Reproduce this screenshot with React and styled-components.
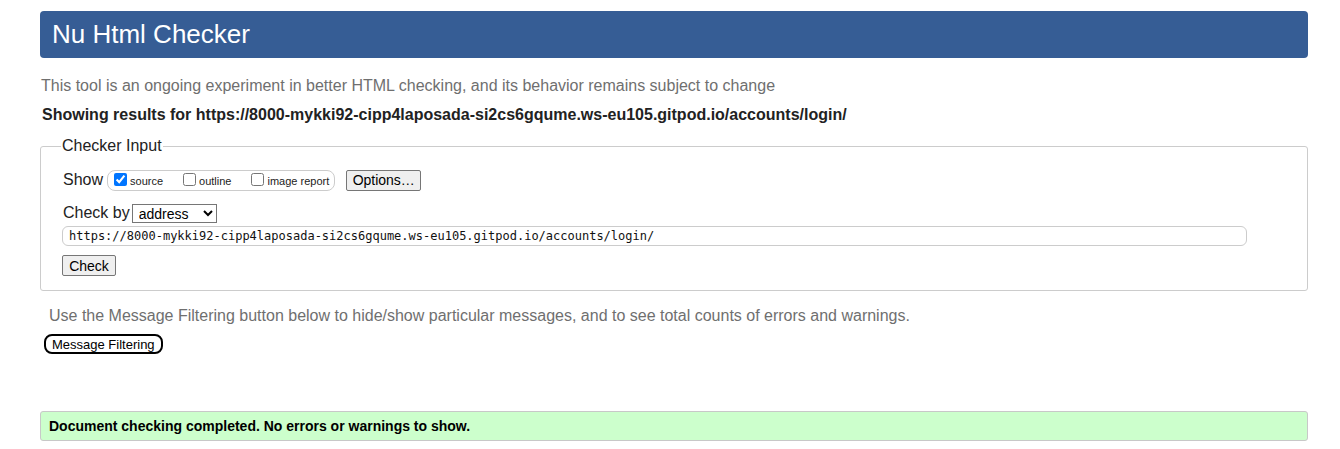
import styled, { createGlobalStyle } from "styled-components"

const GlobalStyle = createGlobalStyle`
    body {
        margin: 0;
        background: #fff;
        font-family: "Liberation Sans", Arial, sans-serif;
        color: #222;
    }
`

const SOURCE_URL = "https://8000-mykki92-cipp4laposada-si2cs6gqume.ws-eu105.gitpod.io/accounts/login/"

const App = () => {
    return <>
        <GlobalStyle />
        <Page>
            <Header>Nu Html Checker</Header>
            <Intro>This tool is an ongoing experiment in better HTML checking, and its behavior remains subject to change</Intro>
            <Results>Showing results for {SOURCE_URL}</Results>
            <Fieldset>
                <Legend>Checker Input</Legend>
                <Row $top="9px">
                    <RowLabel>Show</RowLabel>
                    <ShowBox>
                        <Option><Checkbox type="checkbox" defaultChecked />source</Option>
                        <Option><Checkbox type="checkbox" />outline</Option>
                        <Option $last><Checkbox type="checkbox" />image report</Option>
                    </ShowBox>
                    <Button type="button" $width="75px">Options…</Button>
                </Row>
                <Row $top="9px">
                    <RowLabel $gap="2px">Check by</RowLabel>
                    <Select defaultValue="address">
                        <option value="address">address</option>
                        <option value="file">file upload</option>
                        <option value="text">text input</option>
                    </Select>
                </Row>
                <UrlInput type="url" defaultValue={SOURCE_URL} />
                <Button type="button" $width="54px" $top="9px">Check</Button>
            </Fieldset>
            <Note>Use the Message Filtering button below to hide/show particular messages, and to see total counts of errors and warnings.</Note>
            <FilterButton type="button">Message Filtering</FilterButton>
            <Success>Document checking completed. No errors or warnings to show.</Success>
        </Page>
    </>
}

const Page = styled.div`
    padding: 11px 32px 0 40px;
`
const Header = styled.h1`
    margin: 0;
    height: 47px;
    line-height: 46px;
    padding: 0 12px;
    background-color: #365d95;
    border-radius: 4px;
    color: #fff;
    font-size: 26px;
    font-weight: normal;
`
const Intro = styled.p`
    margin: 18px 0 0 1px;
    line-height: 20px;
    font-size: 16px;
    color: #6f6f6f;
`
const Results = styled.p`
    margin: 9px 0 0 2px;
    line-height: 20px;
    font-size: 16px;
    font-weight: bold;
    color: #222;
`
const Fieldset = styled.fieldset`
    margin: 12px 0 0 0;
    padding: 4px 20px 14px 21px;
    border: 1px solid #cccccc;
    border-radius: 3px;
    display: flex;
    flex-direction: column;
    align-items: flex-start;
`
const Legend = styled.legend`
    padding: 0 1px;
    margin-left: -1px;
    line-height: 18px;
    font-size: 16px;
    color: #222;
`
const Row = styled.div`
    display: flex;
    align-items: center;
    margin-top: ${props => props.$top || "0"};
    height: 24px;
`
const RowLabel = styled.span`
    font-size: 16px;
    color: #222;
    margin-right: ${props => props.$gap || "4px"};
    margin-left: 1px;
`
const ShowBox = styled.div`
    display: flex;
    align-items: center;
    height: 19px;
    padding: 0 0 0 6px;
    border: 1px solid #cccccc;
    border-radius: 8px;
    margin-right: 11px;
`
const Option = styled.label`
    display: flex;
    align-items: center;
    font-size: 11px;
    color: #222;
    margin-right: ${props => props.$last ? "5px" : "20px"};
    padding-top: 2px;
`
const Checkbox = styled.input`
    width: 13px;
    height: 13px;
    margin: -3px 3px 0 0;
`
const Button = styled.button`
    width: ${props => props.$width};
    height: 21px;
    margin-top: ${props => props.$top || "0"};
    padding: 0;
    font-family: "Liberation Sans", Arial, sans-serif;
    font-size: 14px;
    color: #000;
    background-color: #efefef;
    border: 1px solid #767676;
    border-radius: 2px;
`
const Select = styled.select`
    width: 85px;
    height: 19px;
    font-family: "Liberation Sans", Arial, sans-serif;
    font-size: 14px;
    color: #000;
    border: 1px solid #767676;
    border-radius: 0;
    background: #fff;
    padding: 0 0 0 2px;
`
const UrlInput = styled.input`
    box-sizing: border-box;
    width: 1185px;
    height: 20px;
    margin-top: 1px;
    padding: 0 6px;
    font-family: "DejaVu Sans Mono", "Liberation Mono", monospace;
    font-size: 12px;
    color: #111;
    border: 1px solid #cccccc;
    border-radius: 6px;
    outline: none;
`
const Note = styled.p`
    margin: 15px 0 0 9px;
    line-height: 20px;
    font-size: 16px;
    color: #6f6f6f;
`
const FilterButton = styled.button`
    display: block;
    margin: 8px 0 0 4px;
    height: 20px;
    padding: 0 6px;
    font-family: "Liberation Sans", Arial, sans-serif;
    font-size: 13px;
    color: #000;
    background: #fff;
    border: 2px solid #000;
    border-radius: 8px;
`
const Success = styled.div`
    margin-top: 57px;
    height: 28px;
    line-height: 28px;
    padding: 0 8px;
    background-color: #ccffcc;
    border: 1px solid #c8c8c8;
    border-radius: 3px;
    font-size: 14px;
    font-weight: bold;
    color: #000;
`

export default App
